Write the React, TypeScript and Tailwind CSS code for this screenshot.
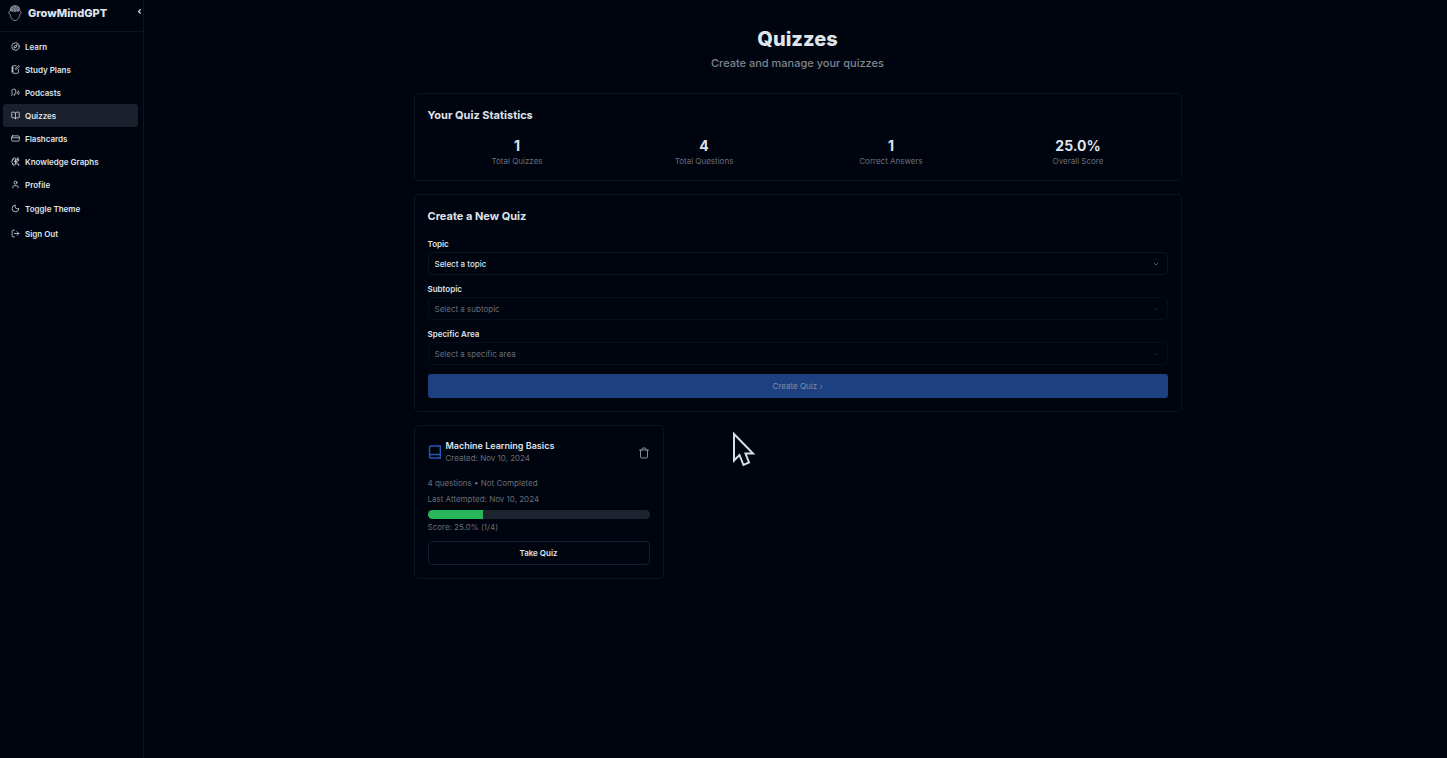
import { useState } from 'react';
import type { ReactNode } from 'react';
import {
  BookOpen,
  BrainCircuit,
  ChevronDown,
  ChevronLeft,
  Compass,
  CreditCard,
  LogOut,
  Moon,
  NotebookPen,
  Speech,
  Trash,
  User,
} from 'lucide-react';
import type { LucideIcon } from 'lucide-react';

interface NavItem {
  label: string;
  icon: LucideIcon;
}

const navItems: NavItem[] = [
  { label: 'Learn', icon: Compass },
  { label: 'Study Plans', icon: NotebookPen },
  { label: 'Podcasts', icon: Speech },
  { label: 'Quizzes', icon: BookOpen },
  { label: 'Flashcards', icon: CreditCard },
  { label: 'Knowledge Graphs', icon: BrainCircuit },
  { label: 'Profile', icon: User },
];

const stats = [
  { value: '1', label: 'Total Quizzes' },
  { value: '4', label: 'Total Questions' },
  { value: '1', label: 'Correct Answers' },
  { value: '25.0%', label: 'Overall Score' },
];

const quizzes = [
  {
    title: 'Machine Learning Basics',
    created: 'Nov 10, 2024',
    questions: 4,
    correct: 1,
    attempted: 'Nov 10, 2024',
  },
];

function Logo() {
  return (
    <svg viewBox="0 0 28 32" className="h-4 w-3.5 shrink-0" fill="none" stroke="#a9aeb8" strokeWidth="1.5" strokeLinecap="round" strokeLinejoin="round">
      <path d="M3.500 12C0.500 12 1 18.500 4.500 19C5 25 9 31 14 31C19 31 23 25 23.500 19C27 18.500 27.500 12 24.500 12" />
      <path d="M5 11C3.500 6 7 1.500 14 1.500C21 1.500 24.500 6 23 11C21 14 18 11 16.500 12C15 13.500 13 13.500 11.500 12C10 11 7 14 5 11Z" fill="#4a505d" />
      <path d="M14 2V12M8 5C10 4.500 11 6 10 8M20 5C18 4.500 17 6 18 8M6 9C8 8 9 9 9 11M22 9C20 8 19 9 19 11" />
    </svg>
  );
}

function Sidebar() {
  return (
    <aside className="flex w-36 shrink-0 flex-col border-r border-[#0b1424]">
      <div className="flex h-8 items-start justify-between border-b border-[#0b1424] pl-2">
        <a href="#" className="flex items-center gap-1.5 pt-[5px] text-[11px] font-extrabold leading-4">
          <Logo />
          GrowMindGPT
        </a>
        <button type="button" aria-label="Collapse sidebar" className="pt-2">
          <ChevronLeft className="size-[7px]" strokeWidth={4} />
        </button>
      </div>
      <nav className="flex flex-col pl-[3px] pr-[5px] pt-[3px]">
        {navItems.map(({ label, icon: Icon }) => (
          <a
            key={label}
            href="#"
            aria-current={label === 'Quizzes' ? 'page' : undefined}
            className={`flex h-[23px] items-center gap-[5px] rounded-[3px] px-2 text-[8px] font-semibold ${
              label === 'Quizzes' ? 'bg-[#1a202c]' : ''
            }`}
          >
            <Icon className="size-[9px]" />
            {label}
          </a>
        ))}
        <div className="flex flex-col gap-0.5 pt-px">
          <button type="button" className="flex h-[23px] items-center gap-[5px] px-2 text-[8px] font-semibold">
            <Moon className="size-[9px]" />
            Toggle Theme
          </button>
          <button type="button" className="flex h-[23px] items-center gap-[5px] px-2 text-[8px] font-semibold">
            <LogOut className="size-[9px]" />
            Sign Out
          </button>
        </div>
      </nav>
    </aside>
  );
}

function Card({ children }: { children: ReactNode }) {
  return <section className="rounded-[5px] border border-[#0b1424] p-[13px]">{children}</section>;
}

interface SelectFieldProps {
  id: string;
  label: string;
  placeholder: string;
  disabled?: boolean;
}

function SelectField({ id, label, placeholder, disabled }: SelectFieldProps) {
  return (
    <div className="flex flex-col gap-0.5">
      <label htmlFor={id} className="text-[8px] font-semibold leading-3">
        {label}
      </label>
      <div className="relative">
        <select
          id={id}
          disabled={disabled}
          className="block h-[23px] w-full appearance-none rounded-[4px] border border-[#0b1424] bg-transparent px-1.5 text-[8px] font-medium disabled:border-[#070e1b] disabled:font-normal disabled:text-[#686e79]"
        >
          <option>{placeholder}</option>
        </select>
        <ChevronDown
          className={`pointer-events-none absolute right-2 top-2 size-2 ${disabled ? 'text-[#262d3a]' : 'text-[#7a808b]'}`}
        />
      </div>
    </div>
  );
}

function QuizCard({ quiz }: { quiz: (typeof quizzes)[number] }) {
  const score = (quiz.correct / quiz.questions) * 100;

  return (
    <Card>
      <div className="flex items-center justify-between">
        <div className="flex items-center gap-1">
          <svg viewBox="0 0 14 14" className="size-3.5" fill="none" stroke="#2459b8" strokeWidth="1.4">
            <path d="M12.300 9.500H3.500C2 9.500 1.500 10.500 1.500 11.500V2.500C1.500 1.500 2 1 3 1H12.300V13H3.500C2 13 1.500 12.500 1.500 11.500" />
          </svg>
          <div>
            <h3 className="text-[9px] font-semibold leading-[13px]">{quiz.title}</h3>
            <p className="text-[8px] leading-3 text-[#686e79]">Created: {quiz.created}</p>
          </div>
        </div>
        <button type="button" aria-label="Delete quiz" className="pt-0.5 text-[#858a93]">
          <Trash className="size-3" />
        </button>
      </div>
      <div className="mt-[13px] flex flex-col gap-1 text-[8px] leading-3 text-[#686e79]">
        <p>
          {quiz.questions} questions • Not Completed
        </p>
        <p>Last Attempted: {quiz.attempted}</p>
      </div>
      <div className="mt-[5px] h-[9px] overflow-hidden rounded-full bg-[#1d232f]">
        <div className="h-full bg-[#28b75b]" style={{ width: `${score}%` }} />
      </div>
      <p className="mt-0.5 text-[8px] leading-3 text-[#686e79]">
        Score: {score.toFixed(1)}% ({quiz.correct}/{quiz.questions})
      </p>
      <button type="button" className="mt-2 h-6 w-full rounded-[4px] border border-[#141d30] text-[8px] font-semibold">
        Take Quiz
      </button>
    </Card>
  );
}

function Pointer({ x, y }: { x: number; y: number }) {
  return (
    <svg
      viewBox="0 0 24 36"
      className="pointer-events-none fixed h-9 w-6"
      style={{ left: x, top: y }}
      fill="#00040f"
      stroke="#d9dde5"
      strokeWidth="2"
    >
      <path d="M2 3V29.500L7.500 24L11.500 34L17 31.500L13.500 22.500H21Z" />
    </svg>
  );
}

export default function App() {
  const [pointer] = useState({ x: 732, y: 431 });

  return (
    <div className="flex min-h-screen bg-[#00040f] font-['Inter',sans-serif] text-[#dfe3ea]">
      <Sidebar />
      <main className="flex-1 pl-1 pt-[25px]">
        <div className="mx-auto flex max-w-3xl flex-col gap-[13px]">
          <header className="pb-2 text-center">
            <h1 className="text-[20px] font-extrabold leading-7">Quizzes</h1>
            <p className="mt-px text-[11px] font-medium leading-[18px] text-[#80858f]">Create and manage your quizzes</p>
          </header>

          <Card>
            <h2 className="text-[11px] font-bold leading-4">Your Quiz Statistics</h2>
            <dl className="mt-3.5 grid grid-cols-4 gap-2 text-center">
              {stats.map((stat) => (
                <div key={stat.label} className="flex flex-col-reverse">
                  <dt className="text-[8px] leading-3 text-[#686e79]">{stat.label}</dt>
                  <dd className="text-[14px] font-bold leading-[18px]">{stat.value}</dd>
                </div>
              ))}
            </dl>
          </Card>

          <Card>
            <h2 className="text-[11px] font-bold leading-4">Create a New Quiz</h2>
            <form className="mt-3.5" onSubmit={(e) => e.preventDefault()}>
              <div className="flex flex-col gap-2">
                <SelectField id="topic" label="Topic" placeholder="Select a topic" />
                <SelectField id="subtopic" label="Subtopic" placeholder="Select a subtopic" disabled />
                <SelectField id="area" label="Specific Area" placeholder="Select a specific area" disabled />
              </div>
              <button
                type="submit"
                disabled
                className="mt-[9px] h-6 w-full rounded-[3px] bg-[#1d4080] text-[8px] text-[#7f8da6]"
              >
                Create Quiz ›
              </button>
            </form>
          </Card>

          <div className="grid grid-cols-3 gap-[9px]">
            {quizzes.map((quiz) => (
              <QuizCard key={quiz.title} quiz={quiz} />
            ))}
          </div>
        </div>
      </main>
      <Pointer x={pointer.x} y={pointer.y} />
    </div>
  );
}
